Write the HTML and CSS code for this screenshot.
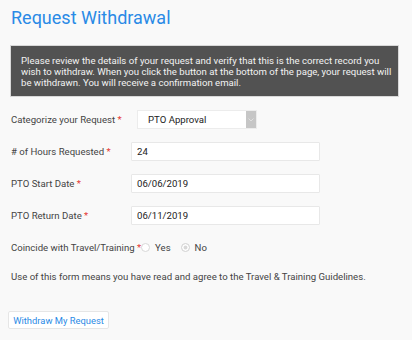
FILE: index.html
```html
<!DOCTYPE html>
<html lang="en">
<head>
    <meta charset="UTF-8">
    <title>Request Withdrawal</title>
    <link rel="stylesheet" href="styles.css">
</head>
<body>
    <div class="page">
        <h1>Request Withdrawal</h1>
        <div class="notice">
            Please review the details of your request and verify that this is the correct record you<br>
            wish to withdraw. When you click the button at the bottom of the page, your request will<br>
            be withdrawn. You will receive a confirmation email.
        </div>
        <form class="form">
            <div class="row">
                <label>Categorize your Request <span class="req">*</span></label>
                <div class="select">
                    <span class="select-value">PTO Approval</span>
                    <span class="select-btn">
                        <svg width="6" height="4" viewBox="0 0 6 4"><path d="M0.5 0.5 L3 3 L5.5 0.5" fill="none" stroke="#e6e6e6" stroke-width="0.8"/></svg>
                    </span>
                </div>
            </div>
            <div class="row">
                <label># of Hours Requested <span class="req">*</span></label>
                <input type="text" value="24">
            </div>
            <div class="row">
                <label>PTO Start Date <span class="req">*</span></label>
                <input type="text" value="06/06/2019">
            </div>
            <div class="row">
                <label>PTO Return Date <span class="req">*</span></label>
                <input type="text" value="06/11/2019">
            </div>
            <div class="row radio-row">
                <label>Coincide with Travel/Training <span class="req">*</span></label>
                <span class="radio"></span><span class="radio-label">Yes</span>
                <span class="radio checked"></span><span class="radio-label">No</span>
            </div>
            <p class="agree">Use of this form means you have read and agree to the Travel &amp; Training Guidelines.</p>
            <button type="button" class="btn">Withdraw My Request</button>
        </form>
    </div>
</body>
</html>
```
FILE: styles.css
```css
body {
    margin: 0;
    padding: 0;
    background-color: #f9f9f9;
    font-family: Roboto, "Liberation Sans", sans-serif;
    color: #444;
}
.page {
    padding: 6px 13px 0 10px;
}
h1 {
    margin: 0 0 0 1px;
    font-size: 18px;
    font-weight: 400;
    color: #2a8ae6;
    line-height: 24px;
}
.notice {
    margin-top: 15px;
    padding: 9px 4px 8px 10px;
    background-color: #525252;
    border: 1px solid #d8d8d8;
    color: #f2f2f2;
    font-size: 9.6px;
    line-height: 11px;
    white-space: nowrap;
    overflow: hidden;
}
.form {
    padding-left: 1px;
    margin-top: 13px;
}
.row {
    display: flex;
    align-items: center;
    height: 19px;
    margin-bottom: 13px;
    font-size: 9.6px;
}
.row label {
    width: 120px;
    flex-shrink: 0;
}
.req {
    color: #e53935;
}
.select {
    display: flex;
    width: 120px;
    height: 19px;
    margin-left: 6px;
    background: #fff;
    border: 1px solid #ececec;
    box-sizing: border-box;
}
.select-value {
    flex: 1;
    padding-left: 10px;
    line-height: 17px;
    color: #222;
}
.select-btn {
    width: 10px;
    background: #c6c6c6;
    display: flex;
    align-items: center;
    justify-content: center;
}
.row input {
    width: 189px;
    height: 19px;
    box-sizing: border-box;
    border: 1px solid #e8e8e8;
    border-radius: 1px;
    padding: 0 0 0 5px;
    font-family: inherit;
    font-size: 9.6px;
    color: #222;
    background: #fff;
}
.radio-row label {
    width: auto;
    margin-right: 0;
}
.radio {
    width: 9px;
    height: 9px;
    border: 1px solid #d8d8d8;
    border-radius: 50%;
    background: #fff;
    margin-right: 5px;
    box-sizing: border-box;
}
.radio.checked {
    background: #d8d8d8;
    box-shadow: inset 0 0 0 1.5px #fff;
}
.radio-label {
    margin-right: 10px;
}
.agree {
    font-size: 9.6px;
    margin: 14px 0 0 0;
}
.btn {
    margin-top: 29px;
    margin-left: -3px;
    width: 101px;
    height: 18px;
    padding: 0;
    background: #fff;
    border: 1px solid #e6e6e6;
    border-radius: 2px;
    color: #2a8ae6;
    font-family: inherit;
    font-size: 9.4px;
    cursor: pointer;
}
```
